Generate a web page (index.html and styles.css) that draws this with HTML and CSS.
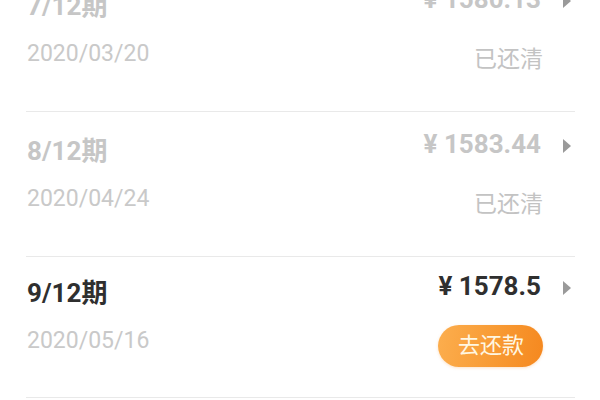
FILE: index.html
```html
<!DOCTYPE html>
<html lang="zh-CN">
<head>
<meta charset="utf-8">
<title>还款计划</title>
<link rel="stylesheet" href="styles.css">
</head>
<body>
<div class="list">
  <div class="row done">
    <div class="left">
      <div class="title">7/12期</div>
      <div class="date">2020/03/20</div>
    </div>
    <div class="right">
      <div class="amount-line"><span class="amount">¥ 1580.13</span><span class="arrow"></span></div>
      <div class="status">已还清</div>
    </div>
  </div>
  <div class="row done">
    <div class="left">
      <div class="title">8/12期</div>
      <div class="date">2020/04/24</div>
    </div>
    <div class="right">
      <div class="amount-line"><span class="amount">¥ 1583.44</span><span class="arrow"></span></div>
      <div class="status">已还清</div>
    </div>
  </div>
  <div class="row current">
    <div class="left">
      <div class="title">9/12期</div>
      <div class="date">2020/05/16</div>
    </div>
    <div class="right">
      <div class="amount-line"><span class="amount">¥ 1578.5</span><span class="arrow"></span></div>
      <div class="status"><span class="pay-btn">去还款</span></div>
    </div>
  </div>
</div>
</body>
</html>
```
FILE: styles.css
```css
html, body {
  margin: 0;
  padding: 0;
  background: #ffffff;
  width: 600px;
  height: 400px;
  overflow: hidden;
}

body {
  font-family: "Roboto", "Noto Sans CJK SC", sans-serif;
}

.list {
  margin: -33px 25px 0 26px;
}

.row {
  display: flex;
  justify-content: space-between;
  height: 144px;
  border-bottom: 1px solid #e9e9e9;
}

.left {
  display: flex;
  flex-direction: column;
  padding: 21px 0 0 1px;
}

.title {
  font-size: 26px;
  font-weight: 700;
  line-height: 36px;
  color: #2f2f2f;
}

.done .title {
  color: #c6c6c6;
}

.date {
  margin-top: 12px;
  font-size: 23px;
  line-height: 36px;
  color: #c9c9c9;
}

.right {
  display: flex;
  flex-direction: column;
  align-items: flex-end;
  padding-top: 14px;
}

.amount-line {
  display: flex;
  align-items: center;
  height: 36px;
}

.amount {
  font-size: 26px;
  font-weight: 700;
  line-height: 36px;
  color: #2f2f2f;
}

.done .amount {
  color: #c6c6c6;
}

.arrow {
  width: 0;
  height: 0;
  margin: 4px 4px 0 22px;
  border-left: 8px solid #9a9a9a;
  border-top: 7px solid transparent;
  border-bottom: 7px solid transparent;
}

.status {
  margin-top: 18px;
  margin-right: 32px;
  height: 42px;
  line-height: 42px;
  font-size: 23px;
  color: #c3c3c3;
}

.done .status {
  margin-top: 22px;
}

.current {
  height: 140px;
}

.current .left {
  padding-top: 18px;
}

.current .right {
  padding-top: 11px;
}

.current .status {
  margin-top: 21px;
}

.pay-btn {
  display: inline-block;
  height: 42px;
  line-height: 42px;
  padding: 0 19px 0 20px;
  border-radius: 21px;
  font-size: 22px;
  color: #fff7e2;
  background: linear-gradient(100deg, #fcae4e 0%, #f89a33 55%, #f5881f 100%);
  box-shadow: 0 1px 3px rgba(245, 140, 40, 0.25);
}
```
